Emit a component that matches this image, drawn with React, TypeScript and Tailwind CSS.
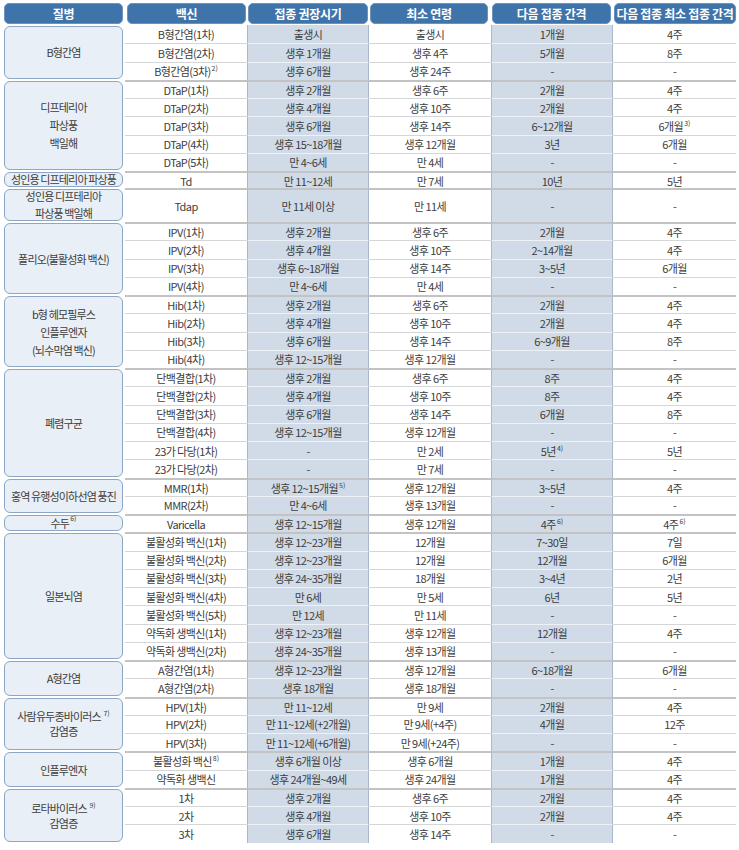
import React from "react";

type Group = { name: string[]; rows: string[][]; tight?: boolean; hs?: number[] };

const groups: Group[] = [
  { name: ["B형간염"], rows: [
    ["B형간염(1차)", "출생시", "출생시", "1개월", "4주"],
    ["B형간염(2차)", "생후 1개월", "생후 4주", "5개월", "8주"],
    ["B형간염(3차)^2)", "생후 6개월", "생후 24주", "-", "-"],
  ]},
  { name: ["디프테리아", "파상풍", "백일해"], rows: [
    ["DTaP(1차)", "생후 2개월", "생후 6주", "2개월", "4주"],
    ["DTaP(2차)", "생후 4개월", "생후 10주", "2개월", "4주"],
    ["DTaP(3차)", "생후 6개월", "생후 14주", "6~12개월", "6개월^3)"],
    ["DTaP(4차)", "생후 15~18개월", "생후 12개월", "3년", "6개월"],
    ["DTaP(5차)", "만 4~6세", "만 4세", "-", "-"],
  ]},
  { name: ["성인용 디프테리아 파상풍"], hs: [17], rows: [["Td", "만 11~12세", "만 7세", "10년", "5년"]] },
  { name: ["성인용 디프테리아", "파상풍 백일해"], hs: [34], rows: [["Tdap", "만 11세 이상", "만 11세", "-", "-"]] },
  { name: ["폴리오(불활성화 백신)"], rows: [
    ["IPV(1차)", "생후 2개월", "생후 6주", "2개월", "4주"],
    ["IPV(2차)", "생후 4개월", "생후 10주", "2~14개월", "4주"],
    ["IPV(3차)", "생후 6~18개월", "생후 14주", "3~5년", "6개월"],
    ["IPV(4차)", "만 4~6세", "만 4세", "-", "-"],
  ]},
  { name: ["b형 헤모필루스", "인플루엔자", "(뇌수막염 백신)"], rows: [
    ["Hib(1차)", "생후 2개월", "생후 6주", "2개월", "4주"],
    ["Hib(2차)", "생후 4개월", "생후 10주", "2개월", "4주"],
    ["Hib(3차)", "생후 6개월", "생후 14주", "6~9개월", "8주"],
    ["Hib(4차)", "생후 12~15개월", "생후 12개월", "-", "-"],
  ]},
  { name: ["폐렴구균"], rows: [
    ["단백결합(1차)", "생후 2개월", "생후 6주", "8주", "4주"],
    ["단백결합(2차)", "생후 4개월", "생후 10주", "8주", "4주"],
    ["단백결합(3차)", "생후 6개월", "생후 14주", "6개월", "8주"],
    ["단백결합(4차)", "생후 12~15개월", "생후 12개월", "-", "-"],
    ["23가 다당(1차)", "-", "만 2세", "5년^4)", "5년"],
    ["23가 다당(2차)", "-", "만 7세", "-", "-"],
  ]},
  { name: ["홍역 유행성이하선염 풍진"], rows: [
    ["MMR(1차)", "생후 12~15개월^5)", "생후 12개월", "3~5년", "4주"],
    ["MMR(2차)", "만 4~6세", "생후 13개월", "-", "-"],
  ]},
  { name: ["수두^6)"], rows: [["Varicella", "생후 12~15개월", "생후 12개월", "4주^6)", "4주^6)"]] },
  { name: ["일본뇌염"], rows: [
    ["불활성화 백신(1차)", "생후 12~23개월", "12개월", "7~30일", "7일"],
    ["불활성화 백신(2차)", "생후 12~23개월", "12개월", "12개월", "6개월"],
    ["불활성화 백신(3차)", "생후 24~35개월", "18개월", "3~4년", "2년"],
    ["불활성화 백신(4차)", "만 6세", "만 5세", "6년", "5년"],
    ["불활성화 백신(5차)", "만 12세", "만 11세", "-", "-"],
    ["약독화 생백신(1차)", "생후 12~23개월", "생후 12개월", "12개월", "4주"],
    ["약독화 생백신(2차)", "생후 24~35개월", "생후 13개월", "-", "-"],
  ]},
  { name: ["A형간염"], rows: [
    ["A형간염(1차)", "생후 12~23개월", "생후 12개월", "6~18개월", "6개월"],
    ["A형간염(2차)", "생후 18개월", "생후 18개월", "-", "-"],
  ]},
  { name: ["사람유두종바이러스 ^7)", "감염증"], tight: true, rows: [
    ["HPV(1차)", "만 11~12세", "만 9세", "2개월", "4주"],
    ["HPV(2차)", "만 11~12세(+2개월)", "만 9세(+4주)", "4개월", "12주"],
    ["HPV(3차)", "만 11~12세(+6개월)", "만 9세(+24주)", "-", "-"],
  ]},
  { name: ["인플루엔자"], rows: [
    ["불활성화 백신^8)", "생후 6개월 이상", "생후 6개월", "1개월", "4주"],
    ["약독화 생백신", "생후 24개월~49세", "생후 24개월", "1개월", "4주"],
  ]},
  { name: ["로타바이러스 ^9)", "감염증"], tight: true, rows: [
    ["1차", "생후 2개월", "생후 6주", "2개월", "4주"],
    ["2차", "생후 4개월", "생후 10주", "2개월", "4주"],
    ["3차", "생후 6개월", "생후 14주", "-", "-"],
  ]},
];

function T({ s }: { s: string }) {
  const [main, sup] = s.split("^");
  return (
    <span className="leading-[14px]">
      {main}
      {sup && (
        <span className="inline-block align-top text-[7px] leading-[8px] tracking-[0px] ml-[1px]">{sup}</span>
      )}
    </span>
  );
}

const headers: { t: string; cls: string }[] = [
  { t: "질병", cls: "ml-[4px] w-[119px]" },
  { t: "백신", cls: "ml-[4px] w-[119px]" },
  { t: "접종 권장시기", cls: "ml-[2px] w-[120px]" },
  { t: "최소 연령", cls: "ml-[2px] w-[118px]" },
  { t: "다음 접종 간격", cls: "ml-[4px] w-[119px]" },
  { t: "다음 접종 최소 접종 간격", cls: "ml-[3px] w-[122px]" },
];

export default function App() {
  return (
    <div
      className="w-[739px] h-[850px] bg-white text-[#3d3d3d] text-[11px] tracking-[-0.6px]"
      style={{ fontFamily: '"Noto Sans CJK KR", "Noto Sans", sans-serif' }}
    >
      <div className="flex pt-[3px] h-[25px]">
        {headers.map((h, i) => (
          <div
            key={i}
            className={`${h.cls} h-[21px] rounded-[5px] bg-[#3f74aa] border border-[#6d93bd] text-white font-bold text-[12px] tracking-[-0.3px] flex items-center justify-center`}
          >
            {h.t}
          </div>
        ))}
      </div>
      <div className="flex flex-col">
        {groups.map((g, gi) => (
          <div key={gi} className="flex">
            <div className="w-[125px] pl-[4px] pr-[2px] py-[1px] flex">
              <div className="flex-1 rounded-[6px] border-[1.5px] border-[#8ba6c6] bg-[#e9eff7] flex flex-col items-center justify-center">
                <div
                  className={`h-0 flex flex-col items-center justify-center tracking-[-0.85px] ${g.tight ? "leading-[14px] gap-[1px]" : g.hs ? "leading-[17px]" : "leading-[18px]"}`}
                >
                  {g.name.map((n, ni) => (
                    <div key={ni} className="text-center whitespace-nowrap">
                      <T s={n} />
                    </div>
                  ))}
                </div>
              </div>
            </div>
            <div className="w-[611px] flex flex-col">
              {g.rows.map((r, ri) => {
                const first = ri === 0;
                const top = first
                  ? gi === 0
                    ? "border-t-0"
                    : "border-t-2"
                  : "border-t";
                const h = g.hs ? (g.hs[ri] === 34 ? "h-[34px]" : "h-[17px]") : "h-[18.25px]";
                return (
                  <div key={ri} className={`flex ${h}`}>
                    {r.map((c, ci) => {
                      const blue = ci === 1 || ci === 3;
                      const w = ci === 4 ? "flex-1" : "w-[122px]";
                      const topColor = first
                        ? "border-t-[#c3c3c3]"
                        : blue
                        ? "border-t-[#eef2f6]"
                        : "border-t-[#d6d6d6]";
                      return (
                        <div
                          key={ci}
                          className={`${w} ${top} ${topColor} ${
                            blue ? "bg-[#d0dbe7] border-x border-x-[#a7b8cc]" : "bg-white"
                          } flex items-center justify-center whitespace-nowrap`}
                        >
                          <T s={c} />
                        </div>
                      );
                    })}
                  </div>
                );
              })}
            </div>
          </div>
        ))}
      </div>
    </div>
  );
}
